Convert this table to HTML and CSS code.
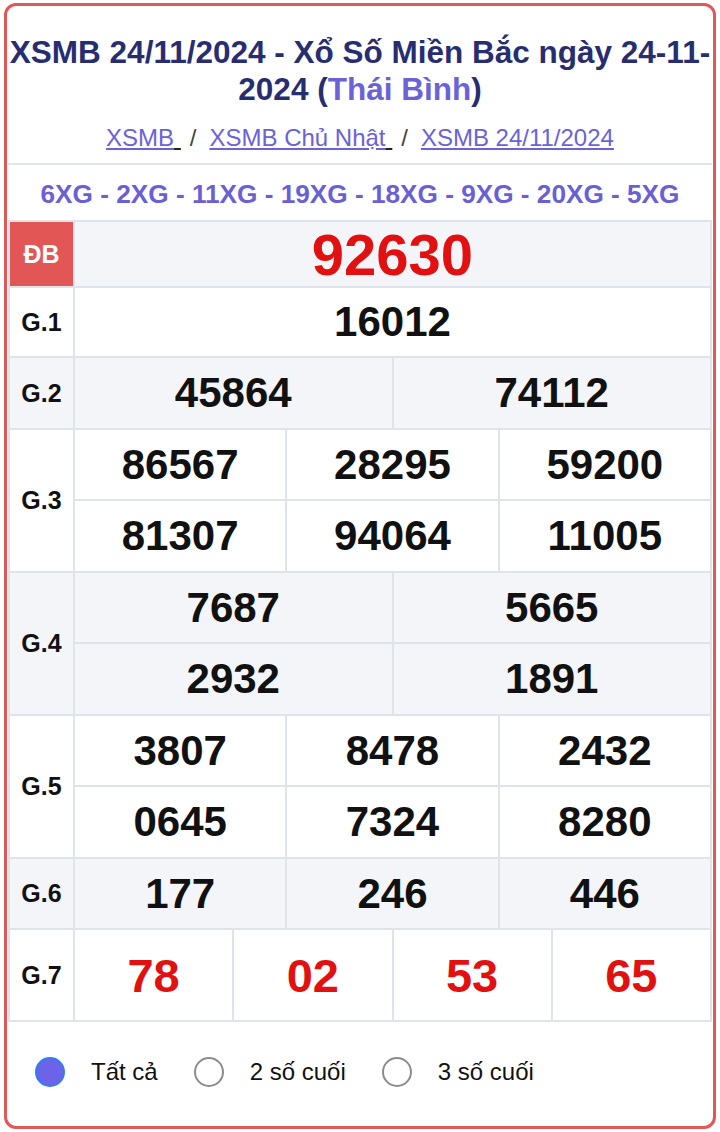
FILE: index.html
```html
<!DOCTYPE html>
<html lang="vi">
<head>
<meta charset="utf-8">
<title>XSMB 24/11/2024</title>
<link rel="stylesheet" href="styles.css">
</head>
<body>
<div class="card">
  <h1 class="title"><span>XSMB 24/11/2024 - Xổ Số Miền Bắc ngày 24-11-</span><span class="nw">2024 (<span class="prov">Thái Bình</span>)</span></h1>
  <nav class="crumbs">
    <a href="#">XSMB<span class="sp"> </span></a><span class="slash">/</span><a href="#">XSMB Chủ Nhật<span class="sp"> </span></a><span class="slash">/</span><a href="#">XSMB 24/11/2024</a>
  </nav>
  <div class="codes">6XG - 2XG - 11XG - 19XG - 18XG - 9XG - 20XG - 5XG</div>
  <div class="results">
    <div class="lbl db r1">ĐB</div>
    <div class="num special c12 r1 grey">92630</div>

    <div class="lbl r1">G.1</div>
    <div class="num c12 r1">16012</div>

    <div class="lbl r1 grey">G.2</div>
    <div class="num c6 r1 grey">45864</div>
    <div class="num c6 r1 grey">74112</div>

    <div class="lbl r2">G.3</div>
    <div class="num c4">86567</div>
    <div class="num c4">28295</div>
    <div class="num c4">59200</div>
    <div class="num c4">81307</div>
    <div class="num c4">94064</div>
    <div class="num c4">11005</div>

    <div class="lbl r2 grey">G.4</div>
    <div class="num c6 grey">7687</div>
    <div class="num c6 grey">5665</div>
    <div class="num c6 grey">2932</div>
    <div class="num c6 grey">1891</div>

    <div class="lbl r2">G.5</div>
    <div class="num c4">3807</div>
    <div class="num c4">8478</div>
    <div class="num c4">2432</div>
    <div class="num c4">0645</div>
    <div class="num c4">7324</div>
    <div class="num c4">8280</div>

    <div class="lbl r1 grey">G.6</div>
    <div class="num c4 grey">177</div>
    <div class="num c4 grey">246</div>
    <div class="num c4 grey">446</div>

    <div class="lbl r1">G.7</div>
    <div class="num red c3">78</div>
    <div class="num red c3">02</div>
    <div class="num red c3">53</div>
    <div class="num red c3">65</div>
  </div>
  <div class="filters">
    <label class="opt"><span class="radio on"></span><span class="opt-text">Tất cả</span></label>
    <label class="opt"><span class="radio"></span><span class="opt-text">2 số cuối</span></label>
    <label class="opt"><span class="radio"></span><span class="opt-text">3 số cuối</span></label>
  </div>
</div>
</body>
</html>
```
FILE: styles.css
```css
* { box-sizing: border-box; }
html, body { margin: 0; padding: 0; background: #ffffff; }
body {
  font-family: "Liberation Sans", Arial, sans-serif;
  width: 720px;
  height: 1132px;
  padding: 3px 4px;
}
.card {
  border: 3px solid #e05858;
  border-radius: 12px;
  height: 1126px;
  padding: 28px 1px 0;
  background: #fff;
}
.title {
  margin: 0 -4px;
  font-size: 31.5px;
  line-height: 37px;
  font-weight: 700;
  color: #282d70;
  text-align: center;
}
.title .nw { white-space: nowrap; }
.prov { color: #6b62d8; }
.crumbs {
  margin-top: 15px;
  font-size: 24px;
  line-height: 30px;
  text-align: center;
  color: #333;
  padding-bottom: 10px;
}
.crumbs a {
  color: #6b62d8;
  text-decoration: underline;
  text-underline-offset: 2px;
}
.crumbs .sp {
  text-decoration: underline;
  text-decoration-color: #222;
  color: #222;
}
.slash {
  color: #444;
  margin: 0 13px 0 9px;
}
.codes {
  border-top: 2px solid #e2e5ec;
  padding: 14px 0 11px;
  font-size: 26.2px;
  line-height: 30px;
  font-weight: 700;
  color: #6a5fd3;
  text-align: center;
}
.results {
  display: grid;
  grid-template-columns: 65px repeat(12, 1fr);
  grid-template-rows: 66px 70px 72px 71px 72px 71px 72px 71px 72px 71px 92px;
  border-top: 2px solid #dfe3ea;
  border-left: 2px solid #dfe3ea;
}
.results > div {
  border-right: 2px solid #dfe3ea;
  border-bottom: 2px solid #dfe3ea;
  display: flex;
  align-items: center;
  justify-content: center;
}
.lbl {
  grid-column: 1;
  font-size: 25px;
  font-weight: 700;
  color: #111;
  background: #fff;
}
.r1 { grid-row: span 1; }
.r2 { grid-row: span 2; }
.db {
  background: #e35656 !important;
  color: #fff;
  font-size: 25px;
}
.grey { background: #f4f5f8; }
.num {
  font-size: 42px;
  font-weight: 700;
  color: #111;
}
.c12 { grid-column: span 12; }
.c6 { grid-column: span 6; }
.c4 { grid-column: span 4; }
.c3 { grid-column: span 3; }
.special {
  font-size: 58px;
  color: #e11111;
}
.red {
  font-size: 47px;
  color: #e11111;
}
.filters {
  display: flex;
  align-items: center;
  gap: 36px;
  height: 104px;
  padding: 0 0 4px 27px;
}
.opt {
  display: flex;
  align-items: center;
  gap: 26px;
  font-size: 24px;
  color: #111;
}
.radio {
  width: 30px;
  height: 30px;
  border-radius: 50%;
  border: 2px solid #8c8c8c;
  background: #fff;
}
.radio.on {
  background: #6c63e8;
  border-color: #2f7cf6;
}
```
